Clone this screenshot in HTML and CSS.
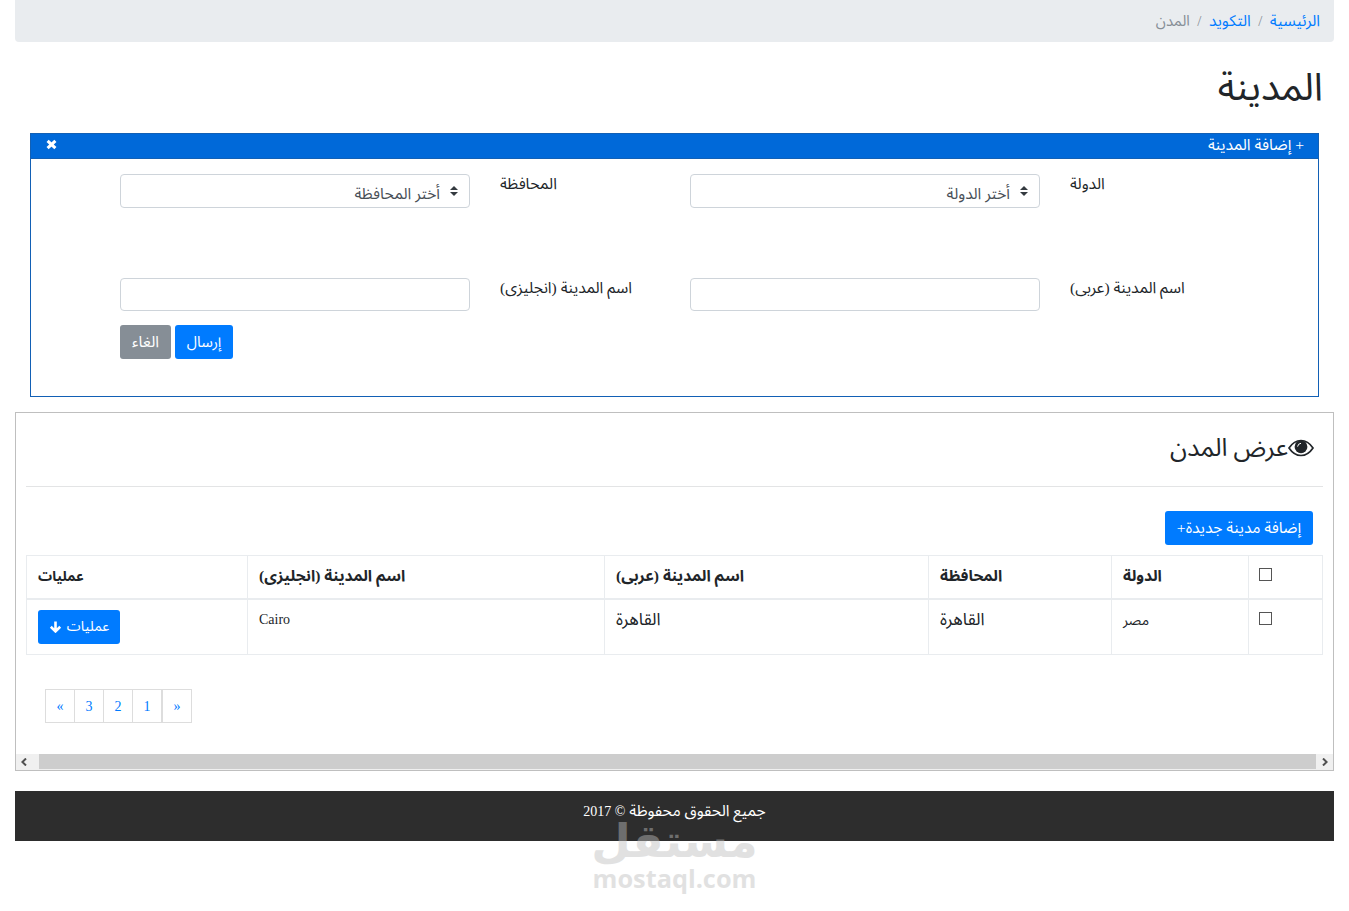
FILE: index.html
```html
<!DOCTYPE html>
<html lang="ar" dir="rtl">
<head>
    <meta charset="UTF-8">
    <meta name="viewport" content="width=device-width, initial-scale=1.0">
    <title>المدن</title>
    <link rel="stylesheet" href="styles.css">
</head>
<body>
    <div class="container">
        <nav class="breadcrumb">
            <a href="#">الرئيسية</a>
            <span class="sep">/</span>
            <a href="#">التكويد</a>
            <span class="sep">/</span>
            <span class="active">المدن</span>
        </nav>

        <h1>المدينة</h1>

        <div class="panel">
            <div class="panel-header">
                <span>+ إضافة المدينة</span>
                <svg class="close" viewBox="0 0 11 11"><path d="M1.6 1.8 L9.4 9.2 M9.4 1.8 L1.6 9.2"/></svg>
            </div>
            <form class="panel-body">
                <label>الدولة</label>
                <div class="control select">
                    <svg class="caret" viewBox="0 0 8 10"><path d="M0 4 L4 0 L8 4Z M0 6 L4 10 L8 6Z"/></svg>
                    <span>أختر الدولة</span>
                </div>
                <label>المحافظة</label>
                <div class="control select">
                    <svg class="caret" viewBox="0 0 8 10"><path d="M0 4 L4 0 L8 4Z M0 6 L4 10 L8 6Z"/></svg>
                    <span>أختر المحافظة</span>
                </div>
                <label>اسم المدينة (عربى)</label>
                <input class="control" type="text">
                <label>اسم المدينة (انجليزى)</label>
                <input class="control" type="text">
                <div class="form-buttons">
                    <button type="button" class="btn btn-send">إرسال</button>
                    <button type="button" class="btn btn-cancel">الغاء</button>
                </div>
            </form>
        </div>

        <div class="list-box">
            <div class="list-content">
                <h2>
                    <svg class="eye" viewBox="0 0 26 18">
                        <path class="lid" d="M1 9 Q6 1.5 13 1.5 Q20 1.5 25 9 Q20 16.5 13 16.5 Q6 16.5 1 9Z"/>
                        <circle cx="13" cy="7.8" r="6.4"/>
                        <path class="shine" d="M9.6 7.6 Q9.9 4.6 13 4.3"/>
                    </svg><span>عرض المدن</span>
                </h2>
                <button type="button" class="btn btn-add">إضافة مدينة جديدة+</button>
                <table>
                    <colgroup>
                        <col class="c-check"><col class="c-country"><col class="c-gov"><col class="c-ar"><col class="c-en"><col class="c-ops">
                    </colgroup>
                    <thead>
                        <tr>
                            <th><span class="check"></span></th>
                            <th>الدولة</th>
                            <th>المحافظة</th>
                            <th>اسم المدينة (عربى)</th>
                            <th>اسم المدينة (انجليزى)</th>
                            <th class="ops-title">عمليات</th>
                        </tr>
                    </thead>
                    <tbody>
                        <tr>
                            <td><span class="check"></span></td>
                            <td class="country">مصر</td>
                            <td class="city">القاهرة</td>
                            <td class="city">القاهرة</td>
                            <td class="latin">Cairo</td>
                            <td>
                                <button type="button" class="btn btn-ops">عمليات
                                    <svg class="arrow" viewBox="0 0 12 12"><path d="M6 0.5 V10 M1.3 5.8 L6 10.4 L10.7 5.8"/></svg>
                                </button>
                            </td>
                        </tr>
                    </tbody>
                </table>
                <div class="pagination">
                    <a href="#">«</a>
                    <a href="#">1</a>
                    <a href="#">2</a>
                    <a href="#">3</a>
                    <a href="#">»</a>
                </div>
            </div>
            <div class="scrollbar">
                <svg viewBox="0 0 6 8"><path d="M1 0.5 L4.6 4 L1 7.5"/></svg>
                <div class="thumb"></div>
                <svg viewBox="0 0 6 8"><path d="M5 0.5 L1.4 4 L5 7.5"/></svg>
            </div>
        </div>

        <footer>
            <span>جميع الحقوق محفوظة <span class="latin">© 2017</span></span>
            <div class="watermark">
                <div class="wm-ar">مستقل</div>
                <div class="wm-en">mostaql.com</div>
            </div>
        </footer>
    </div>
</body>
</html>
```

FILE: styles.css
```css
* {
    box-sizing: border-box;
}
body {
    margin: 0;
    font-family: "Liberation Serif", "Noto Sans Arabic", "Noto Kufi Arabic", "DejaVu Sans", sans-serif;
    font-size: 15.6px;
    line-height: 20px;
    color: #212529;
    background: #fff;
}
a {
    color: #007bff;
    text-decoration: none;
}
.container {
    height: 911px;
    padding: 0 15px;
}
.latin {
    font-size: 14px;
}
.breadcrumb {
    display: flex;
    gap: 7px;
    height: 42px;
    padding: 11px 14px;
    background: #e9ecef;
    border-radius: 0 0 4px 4px;
}
.breadcrumb .sep,
.breadcrumb .active {
    color: #868e96;
    font-size: 14.8px;
}
.breadcrumb .sep {
    padding: 0 0.5px;
}
h1 {
    margin: 20px 11px 0;
    height: 71px;
    font-size: 38.5px;
    font-weight: normal;
    line-height: 50px;
}
.panel {
    height: 264px;
    margin: 0 15px;
    border: 1px solid #1260b5;
}
.panel-header {
    display: flex;
    justify-content: space-between;
    height: 25px;
    padding: 1px 14px 0 15px;
    color: #fff;
    background: #0069d9;
    border-bottom: 1px solid #1260b5;
}
.close {
    width: 11px;
    height: 11px;
    margin-top: 4px;
    stroke: #fff;
    stroke-width: 3.1;
}
.panel-body {
    display: grid;
    grid-template-columns: 219px 350px 220px 350px;
    grid-template-rows: 104px 47px 34px;
    justify-content: end;
    padding: 15px 15px 0 89px;
}
label {
    padding-left: 30px;
    text-align: left;
}
.control {
    width: 350px;
    height: 34px;
    border: 1px solid #ced4da;
    border-radius: 4px;
    background: #fff;
}
input.control {
    height: 33px;
}
.select {
    display: flex;
    gap: 10px;
    padding: 9px 11px 0;
    color: #495057;
}
.caret {
    width: 8px;
    height: 10px;
    margin-top: 2px;
    fill: #343a40;
}
.form-buttons {
    display: flex;
    gap: 4px;
    grid-column: 4;
    justify-content: flex-end;
}
.btn {
    height: 34px;
    padding: 0;
    border: 0;
    border-radius: 3px;
    font: inherit;
    color: #fff;
    background: #007bff;
}
.btn-send {
    width: 58px;
    font-size: 14.8px;
}
.btn-cancel {
    width: 51px;
    background: #868e96;
}
.list-box {
    height: 359px;
    margin-top: 15px;
    border: 1px solid #bfbfbf;
}
.list-content {
    height: 341px;
    padding: 0 10px;
}
h2 {
    display: flex;
    align-items: center;
    height: 74px;
    margin: 0 0 24px;
    padding: 0 9px 4px;
    border-bottom: 1px solid #e3e4e5;
    font-size: 25px;
    font-weight: normal;
    line-height: 34px;
}
.eye {
    width: 26px;
    height: 18px;
    fill: #212529;
}
.eye .lid {
    fill: none;
    stroke: #212529;
    stroke-width: 1.7;
}
.eye .shine {
    fill: none;
    stroke: #fff;
    stroke-width: 1;
}
.btn-add {
    display: block;
    width: 148px;
    margin: 0 10px 10px;
}
table {
    width: 1297px;
    table-layout: fixed;
    border-collapse: collapse;
}
.c-check { width: 74px; }
.c-country { width: 137px; }
.c-gov { width: 183px; }
.c-ar { width: 324px; }
.c-en { width: 357px; }
.c-ops { width: 221px; }
th,
td {
    padding: 10px 10px 0 11px;
    border: 1px solid #e9ecef;
    text-align: left;
    vertical-align: top;
}
th:first-child,
td:first-child {
    padding-left: 10px;
}
th {
    height: 43px;
    border-bottom-width: 2px;
}
td {
    height: 56px;
}
.country,
.ops-title {
    font-size: 14px;
    line-height: 22px;
}
.city {
    font-size: 17px;
}
.check {
    display: block;
    width: 13px;
    height: 13px;
    margin: 2px auto 0 0;
    border: 1px solid #555;
}
.btn-ops {
    display: flex;
    align-items: center;
    justify-content: center;
    gap: 5px;
    width: 82px;
    margin-right: auto;
    font-size: 14px;
}
.arrow {
    width: 13px;
    height: 12px;
    fill: none;
    stroke: #fff;
    stroke-width: 2.6;
}
.pagination {
    display: flex;
    justify-content: flex-end;
    margin: 34px 0 0 19px;
    font-size: 14px;
}
.pagination a {
    width: 30px;
    height: 34px;
    margin-left: -1px;
    border: 1px solid #ddd;
    line-height: 33px;
    text-align: center;
}
.pagination a:first-child,
.pagination a:last-child {
    margin-left: 0;
}
.scrollbar {
    display: flex;
    align-items: center;
    height: 16px;
    padding: 0 5px;
    background: #f0f0f0;
}
.scrollbar svg {
    width: 6px;
    height: 8px;
    fill: none;
    stroke: #505050;
    stroke-width: 2;
}
.thumb {
    flex: 1;
    align-self: flex-start;
    height: 15px;
    margin: 0 6px 0 12px;
    background: #cdcdcd;
}
footer {
    position: relative;
    height: 50px;
    margin-top: 20px;
    padding-top: 10px;
    text-align: center;
    color: #fff;
    background: #2d2d2d;
}
.watermark {
    position: absolute;
    top: 29px;
    left: 50%;
    width: 170px;
    margin-left: -85px;
    color: #bebebe;
    font-weight: bold;
    opacity: 0.45;
}
.wm-ar {
    height: 43px;
    font-family: "DejaVu Sans", sans-serif;
    font-size: 45.5px;
    line-height: 43px;
}
.wm-en {
    direction: ltr;
    font-family: "Open Sans", sans-serif;
    font-size: 25.3px;
    line-height: 30px;
}
```
